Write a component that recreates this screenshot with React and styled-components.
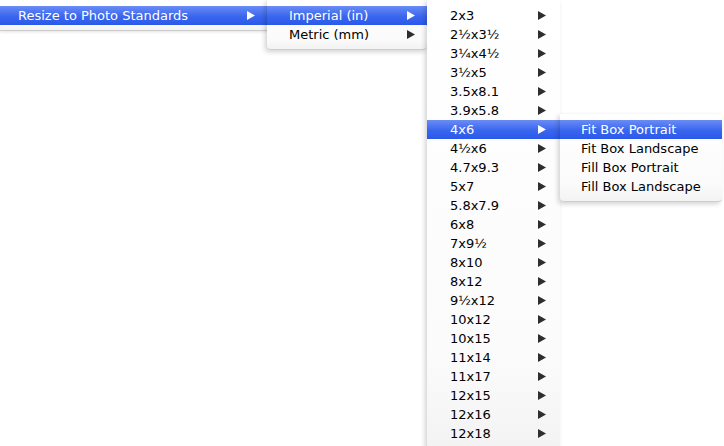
import React from 'react';
import styled, { createGlobalStyle } from 'styled-components';

const GlobalStyle = createGlobalStyle`
  html, body {
    margin: 0;
    padding: 0;
    background: #ffffff;
    overflow: hidden;
  }
  body {
    font-family: 'Lucida Grande', 'DejaVu Sans', sans-serif;
    font-size: 13px;
  }
`;

const Desktop = styled.div`
  display: flex;
  align-items: flex-start;
  width: 724px;
  height: 446px;
  overflow: hidden;
`;

const Menu = styled.div`
  position: relative;
  z-index: ${(p) => p.$level};
  flex: none;
  width: ${(p) => p.$width}px;
  margin-top: ${(p) => p.$top}px;
  padding: 6px 0 5px;
  background: linear-gradient(#ffffff, #fbfbfb 80%, #f3f3f3);
  border-bottom: 1px solid #cdcdcd;
  box-shadow: ${(p) => (p.$level > 1 ? '-2px 2px 5px rgba(0, 0, 0, 0.18)' : '0 1px 3px rgba(0, 0, 0, 0.12)')};
  border-radius: ${(p) => (p.$level > 1 ? '0 0 4px 4px' : '0')};
`;

const Item = styled.div`
  display: flex;
  align-items: center;
  height: 19px;
  padding: 0 ${(p) => p.$right}px 0 ${(p) => p.$indent}px;
  color: ${(p) => (p.$active ? '#ffffff' : '#000000')};
  background: ${(p) => (p.$active ? 'linear-gradient(#6a8cf6, #3a66ee 55%, #2a58ea)' : 'transparent')};
  white-space: nowrap;
  line-height: 19px;
`;

const Label = styled.span`
  flex: 1;
`;

const Arrow = ({ active }) => (
  <svg width="8" height="9" viewBox="0 0 8 9">
    <polygon points="0,0 8,4.5 0,9" fill={active ? '#ffffff' : '#2e2e2e'} />
  </svg>
);

const sizes = [
  '2x3', '2½x3½', '3¼x4½', '3½x5', '3.5x8.1', '3.9x5.8', '4x6', '4½x6',
  '4.7x9.3', '5x7', '5.8x7.9', '6x8', '7x9½', '8x10', '8x12', '9½x12',
  '10x12', '10x15', '11x14', '11x17', '12x15', '12x16', '12x18'
];

const fits = ['Fit Box Portrait', 'Fit Box Landscape', 'Fill Box Portrait', 'Fill Box Landscape'];

export default function App() {
  return (
    <>
      <GlobalStyle />
      <Desktop>
        <Menu $width={267} $top={0} $level={1}>
          <Item $active $indent={18} $right={12}>
            <Label>Resize to Photo Standards</Label>
            <Arrow active />
          </Item>
        </Menu>
        <Menu $width={160} $top={0} $level={2}>
          <Item $active $indent={22} $right={12}>
            <Label>Imperial (in)</Label>
            <Arrow active />
          </Item>
          <Item $indent={22} $right={12}>
            <Label>Metric (mm)</Label>
            <Arrow />
          </Item>
        </Menu>
        <Menu $width={133} $top={0} $level={3}>
          {sizes.map((s) => (
            <Item key={s} $active={s === '4x6'} $indent={23} $right={14}>
              <Label>{s}</Label>
              <Arrow active={s === '4x6'} />
            </Item>
          ))}
        </Menu>
        <Menu $width={162} $top={114} $level={4}>
          {fits.map((f, i) => (
            <Item key={f} $active={i === 0} $indent={21} $right={12}>
              <Label>{f}</Label>
            </Item>
          ))}
        </Menu>
      </Desktop>
    </>
  );
}
